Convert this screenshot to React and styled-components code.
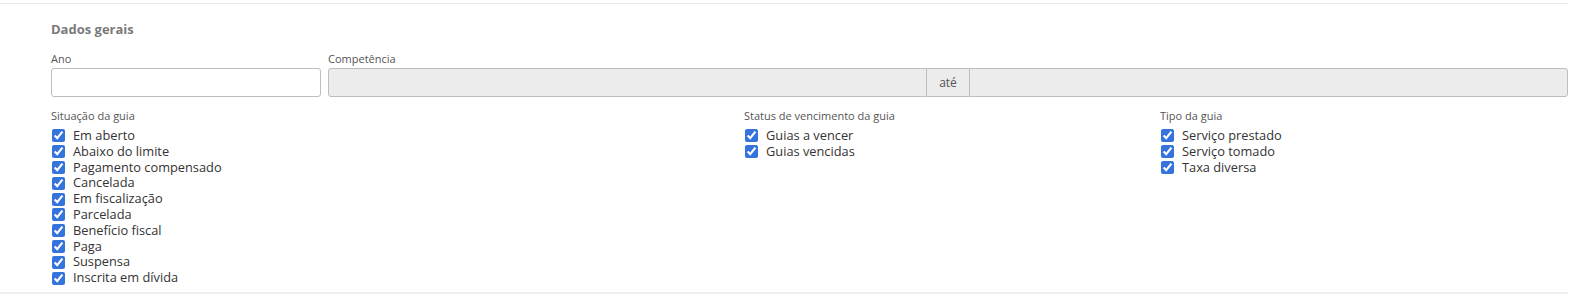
import React from 'react'
import styled, { createGlobalStyle } from 'styled-components'

const GlobalStyle = createGlobalStyle`
  html, body {
    margin: 0;
    overflow: hidden;
    background: #ffffff;
    font-family: 'Open Sans', 'Noto Sans', sans-serif;
  }
`

const situacoes = [
  'Em aberto',
  'Abaixo do limite',
  'Pagamento compensado',
  'Cancelada',
  'Em fiscalização',
  'Parcelada',
  'Benefício fiscal',
  'Paga',
  'Suspensa',
  'Inscrita em dívida',
]

const vencimentos = ['Guias a vencer', 'Guias vencidas']

const tipos = ['Serviço prestado', 'Serviço tomado', 'Taxa diversa']

const CheckGroup = ({ title, items }) => (
  <Group>
    <GroupTitle>{title}</GroupTitle>
    {items.map((item) => (
      <CheckRow key={item}>
        <Checkbox type="checkbox" defaultChecked />
        <CheckText>{item}</CheckText>
      </CheckRow>
    ))}
  </Group>
)

export default () => {
  return (
    <>
      <GlobalStyle />
      <Page>
        <Panel>
          <SectionTitle>Dados gerais</SectionTitle>
          <FieldsRow>
            <Field>
              <FieldLabel>Ano</FieldLabel>
              <Input type="text" />
            </Field>
            <Field>
              <FieldLabel>Competência</FieldLabel>
              <InputGroup>
                <Input type="text" disabled $grouped="left" />
                <Addon>até</Addon>
                <Input type="text" disabled $grouped="right" />
              </InputGroup>
            </Field>
          </FieldsRow>
          <ChecksRow>
            <CheckGroup title="Situação da guia" items={situacoes} />
            <CheckGroup title="Status de vencimento da guia" items={vencimentos} />
            <CheckGroup title="Tipo da guia" items={tipos} />
          </ChecksRow>
        </Panel>
      </Page>
    </>
  )
}

const Page = styled.div`
  padding-top: 3px;
  width: 1568px;
  height: 296px;
  box-sizing: border-box;
`
const Panel = styled.section`
  box-sizing: border-box;
  height: 291px;
  border-top: 1px solid #ebebeb;
  border-bottom: 2px solid #eeeeee;
  padding: 17px 0 0 51px;
`
const SectionTitle = styled.h2`
  margin: 0 0 13px;
  font-size: 13px;
  line-height: 17px;
  font-weight: 700;
  color: #7a7a7a;
`
const FieldsRow = styled.div`
  display: grid;
  grid-template-columns: 270px 1fr;
  column-gap: 7px;
`
const Field = styled.div`
  display: flex;
  flex-direction: column;
`
const FieldLabel = styled.label`
  font-size: 11px;
  line-height: 15px;
  color: #555555;
  margin-bottom: 2px;
`
const InputGroup = styled.div`
  display: flex;
`
const Input = styled.input`
  flex: 1;
  min-width: 0;
  height: 29px;
  box-sizing: border-box;
  border: 1px solid #bdbdbd;
  border-radius: ${({ $grouped }) =>
    $grouped === 'left' ? '3px 0 0 3px' : $grouped === 'right' ? '0 3px 3px 0' : '3px'};
  background: #ffffff;
  padding: 0 8px;
  font-family: inherit;
  font-size: 13px;
  outline: none;

  &:disabled {
    background: #ececec;
  }
`
const Addon = styled.span`
  flex: 0 0 42px;
  height: 29px;
  box-sizing: border-box;
  display: flex;
  align-items: center;
  justify-content: center;
  border-top: 1px solid #bdbdbd;
  border-bottom: 1px solid #bdbdbd;
  background: #ececec;
  font-size: 12px;
  color: #555555;
`
const ChecksRow = styled.div`
  display: grid;
  grid-template-columns: 693px 416px 1fr;
  margin-top: 11px;
`
const Group = styled.div`
  display: flex;
  flex-direction: column;
`
const GroupTitle = styled.div`
  font-size: 11px;
  line-height: 15px;
  color: #555555;
  margin-bottom: 5px;
`
const CheckRow = styled.label`
  display: flex;
  align-items: center;
  height: 15.8px;
`
const Checkbox = styled.input`
  width: 13px;
  height: 13px;
  margin: 0 8px 0 1px;
  accent-color: #3574dc;
`
const CheckText = styled.span`
  font-size: 12.8px;
  line-height: 15.8px;
  color: #333333;
`
